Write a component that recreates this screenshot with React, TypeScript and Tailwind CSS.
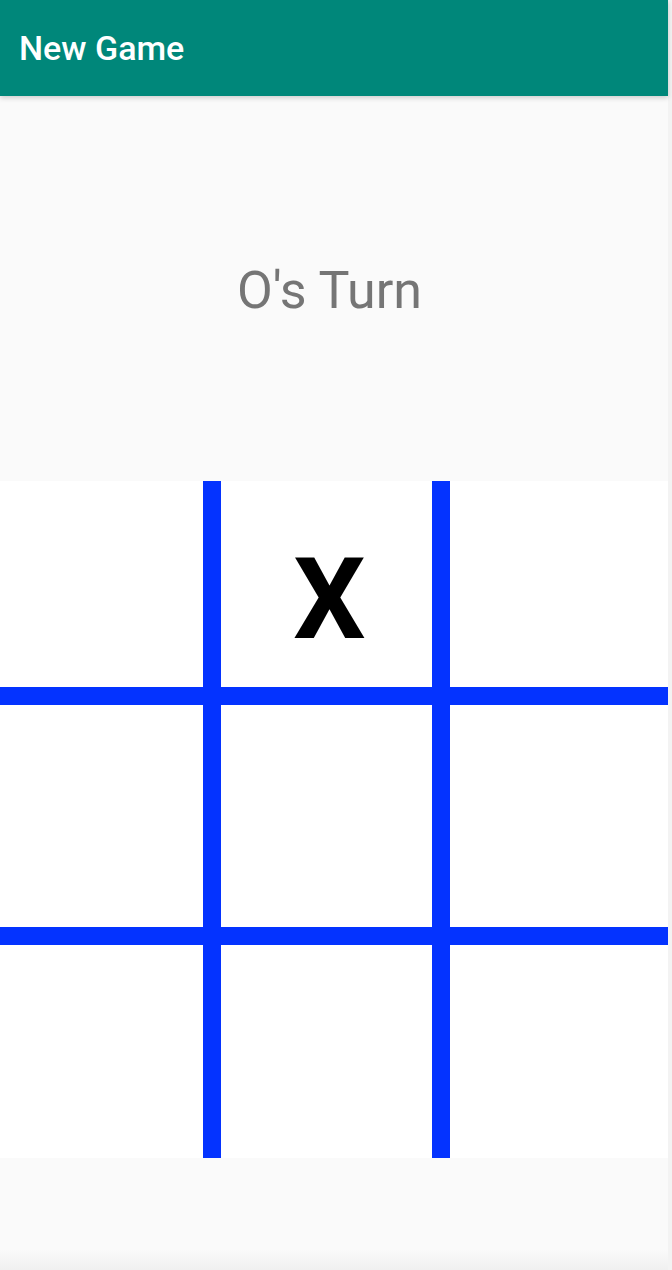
export default function App() {
  const cells = ["", "X", "", "", "", "", "", "", ""];

  return (
    <div className="min-h-[1270px] bg-[#f3f3f3]" style={{ fontFamily: "Roboto, 'Noto Sans', sans-serif" }}>
      <div className="w-[668px] min-h-[1270px] flex flex-col bg-[#fafafa]">
        <header className="h-[96px] bg-[#00877a] flex items-center pl-[19px] shadow-[0_2px_5px_rgba(0,0,0,0.18)] relative z-10">
          <h1 className="text-[34px] font-medium text-white leading-none">New Game</h1>
        </header>

        <div className="h-[385px] flex items-center justify-center pt-[5px] pr-[9px]">
          <p className="text-[52px] text-[#757575]">O's Turn</p>
        </div>

        <div className="grid grid-cols-[203px_211px_1fr] grid-rows-[206px_222px_213px] gap-[18px] bg-[#0433ff] h-[677px]">
          {cells.map((c, i) => (
            <div key={i} className="bg-white flex items-center justify-center">
              {c && (
                <span className="text-[114px] font-bold text-black leading-none pt-[30px] pl-[6px]">{c}</span>
              )}
            </div>
          ))}
        </div>

        <div className="flex-1 flex flex-col justify-end">
          <div className="h-[20px] bg-gradient-to-b from-[#fafafa] to-[#f0f0f0]" />
        </div>
      </div>
    </div>
  );
}
